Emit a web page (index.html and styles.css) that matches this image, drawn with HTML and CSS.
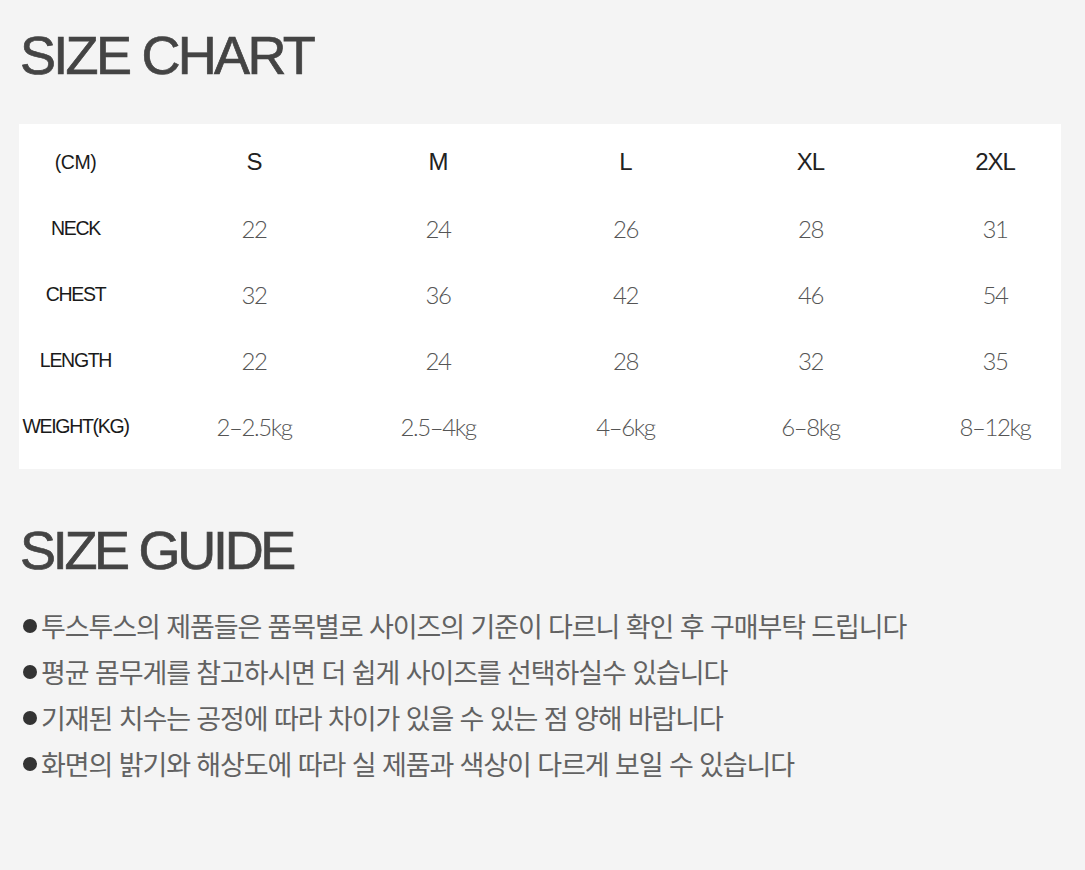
FILE: index.html
```html
<!DOCTYPE html>
<html lang="ko">
<head>
<meta charset="utf-8">
<title>Size Chart</title>
<link rel="stylesheet" href="styles.css">
</head>
<body>
<main class="page">
  <h1 class="title title-chart">SIZE CHART</h1>
  <section class="chart">
    <div class="row head">
      <div class="cell label unit">(CM)</div>
      <div class="cell size">S</div>
      <div class="cell size">M</div>
      <div class="cell size">L</div>
      <div class="cell size">XL</div>
      <div class="cell size last">2XL</div>
    </div>
    <div class="row">
      <div class="cell label">NECK</div>
      <div class="cell num">22</div>
      <div class="cell num">24</div>
      <div class="cell num">26</div>
      <div class="cell num">28</div>
      <div class="cell num last">31</div>
    </div>
    <div class="row">
      <div class="cell label">CHEST</div>
      <div class="cell num">32</div>
      <div class="cell num">36</div>
      <div class="cell num">42</div>
      <div class="cell num">46</div>
      <div class="cell num last">54</div>
    </div>
    <div class="row">
      <div class="cell label">LENGTH</div>
      <div class="cell num">22</div>
      <div class="cell num">24</div>
      <div class="cell num">28</div>
      <div class="cell num">32</div>
      <div class="cell num last">35</div>
    </div>
    <div class="row">
      <div class="cell label">WEIGHT(KG)</div>
      <div class="cell num">2–2.5kg</div>
      <div class="cell num">2.5–4kg</div>
      <div class="cell num">4–6kg</div>
      <div class="cell num">6–8kg</div>
      <div class="cell num last">8–12kg</div>
    </div>
  </section>
  <h2 class="title title-guide">SIZE GUIDE</h2>
  <ul class="guide">
    <li>투스투스의 제품들은 품목별로 사이즈의 기준이 다르니 확인 후 구매부탁 드립니다</li>
    <li>평균 몸무게를 참고하시면 더 쉽게 사이즈를 선택하실수 있습니다</li>
    <li>기재된 치수는 공정에 따라 차이가 있을 수 있는 점 양해 바랍니다</li>
    <li>화면의 밝기와 해상도에 따라 실 제품과 색상이 다르게 보일 수 있습니다</li>
  </ul>
</main>
</body>
</html>
```

FILE: styles.css
```css
html, body {
  margin: 0;
  padding: 0;
  background: #f4f4f4;
}

.page {
  padding: 28px 24px 40px 19px;
  font-family: "Liberation Sans", Arial, sans-serif;
}

.title {
  margin: 0;
  padding-left: 1px;
  font-size: 54px;
  line-height: 54px;
  font-weight: 400;
  color: #444;
  letter-spacing: -2.7px;
  -webkit-text-stroke: 0.7px #444;
}

.chart {
  margin-top: 42px;
  width: 1042px;
  background: #fff;
  padding: 5px 0 10px;
}

.row {
  display: grid;
  grid-template-columns: 146px 178px 190px 185px 185px 158px;
  height: 66px;
  align-items: center;
}

.cell {
  text-align: center;
  white-space: nowrap;
}

.cell.last {
  padding-left: 26px;
}

.label {
  padding-right: 33px;
  font-size: 19.5px;
  letter-spacing: -1.3px;
  color: #1a1a1a;
}

.unit {
  letter-spacing: -0.5px;
}

.size {
  font-size: 24px;
  letter-spacing: -1px;
  color: #222;
}

.num {
  font-family: "Lato", "Liberation Sans", sans-serif;
  font-weight: 300;
  font-size: 24px;
  letter-spacing: -1.4px;
  color: #555;
}

.title-guide {
  margin-top: 54px;
  letter-spacing: -3.3px;
}

.guide {
  list-style: none;
  margin: 26px 0 0;
  padding: 0 0 0 4px;
  font-family: "Noto Sans CJK KR", "Noto Sans", sans-serif;
  font-size: 27px;
  line-height: 46px;
  letter-spacing: -1.1px;
  color: #626262;
}

.guide li {
  display: flex;
  align-items: center;
}

.guide li::before {
  content: "";
  width: 14px;
  height: 14px;
  border-radius: 50%;
  background: #333;
  margin-right: 4px;
  flex: none;
}
```
